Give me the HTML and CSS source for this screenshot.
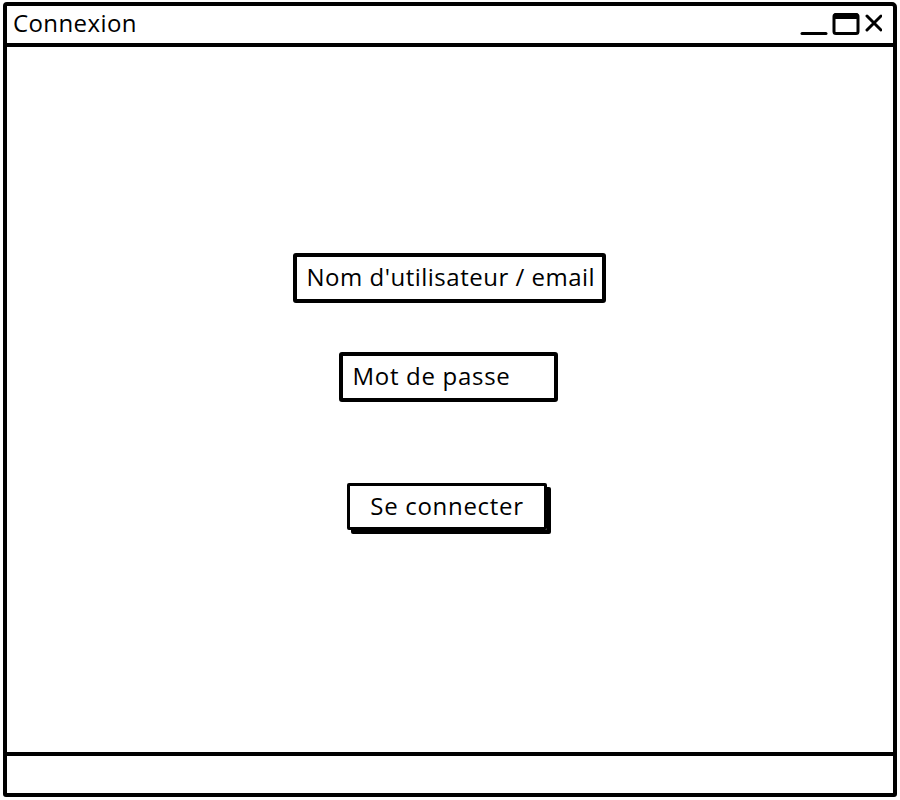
FILE: index.html
```html
<!DOCTYPE html>
<html lang="fr">
<head>
<meta charset="utf-8">
<title>Connexion</title>
<link rel="stylesheet" href="styles.css">
</head>
<body>
<div class="window">
  <div class="titlebar">
    <span class="title">Connexion</span>
    <div class="controls">
      <svg class="icon" width="82" height="26" viewBox="0 0 82 26">
        <path d="M2 22.5 H26" stroke="#000" stroke-width="3" fill="none" stroke-linecap="round"/>
        <rect x="34" y="3.5" width="24" height="19" rx="2" stroke="#000" stroke-width="3" fill="none"/>
        <rect x="34" y="2" width="24" height="6" rx="1.5" fill="#000"/>
        <path d="M67 5 L81 19 M81 5 L67 19" stroke="#000" stroke-width="3" fill="none" stroke-linecap="round"/>
      </svg>
    </div>
  </div>
  <div class="content">
    <div class="field field-user">Nom d'utilisateur / email</div>
    <div class="field field-pass">Mot de passe</div>
    <div class="button">Se connecter</div>
  </div>
  <div class="statusbar"></div>
</div>
</body>
</html>
```
FILE: styles.css
```css
html, body {
  margin: 0;
  padding: 0;
  background: #fff;
}
body {
  font-family: "Open Sans", "DejaVu Sans", sans-serif;
  color: #000;
  padding: 2px 3px 3px 3px;
  height: 800px;
  box-sizing: border-box;
}
.window {
  box-sizing: border-box;
  width: 894px;
  height: 795px;
  border: 4px solid #000;
  border-radius: 4px 5px 3px 3px;
  display: flex;
  flex-direction: column;
}
.titlebar {
  height: 37px;
  border-bottom: 4px solid #000;
  display: flex;
  align-items: center;
  justify-content: space-between;
  padding: 0 11px 0 6px;
  flex-shrink: 0;
}
.title {
  font-size: 24px;
  letter-spacing: 0.4px;
  line-height: 1;
  margin-top: -4px;
}
.controls {
  display: flex;
  align-items: center;
  margin-top: -2px;
}
.icon { display: block; }
.content {
  flex: 1;
  display: flex;
  flex-direction: column;
  align-items: center;
  padding-top: 206px;
}
.field {
  box-sizing: border-box;
  border: 4px solid #000;
  border-radius: 3px;
  font-size: 24px;
  letter-spacing: 0.5px;
  display: flex;
  align-items: center;
  padding-left: 10px;
  padding-bottom: 4px;
  height: 50px;
  white-space: nowrap;
}
.field-user {
  width: 313px;
  margin-left: -2px;
}
.field-pass {
  width: 219px;
  margin-top: 49px;
  margin-left: -4px;
  letter-spacing: 0.7px;
}
.button {
  box-sizing: border-box;
  margin-top: 81px;
  margin-left: -6px;
  width: 200px;
  height: 47px;
  border: 3px solid #000;
  border-radius: 2px;
  box-shadow: 4px 4px 0 #000;
  font-size: 24px;
  letter-spacing: 0.7px;
  display: flex;
  align-items: center;
  justify-content: center;
  padding-bottom: 3px;
  white-space: nowrap;
}
.statusbar {
  height: 37px;
  border-top: 4px solid #000;
  flex-shrink: 0;
}
```
